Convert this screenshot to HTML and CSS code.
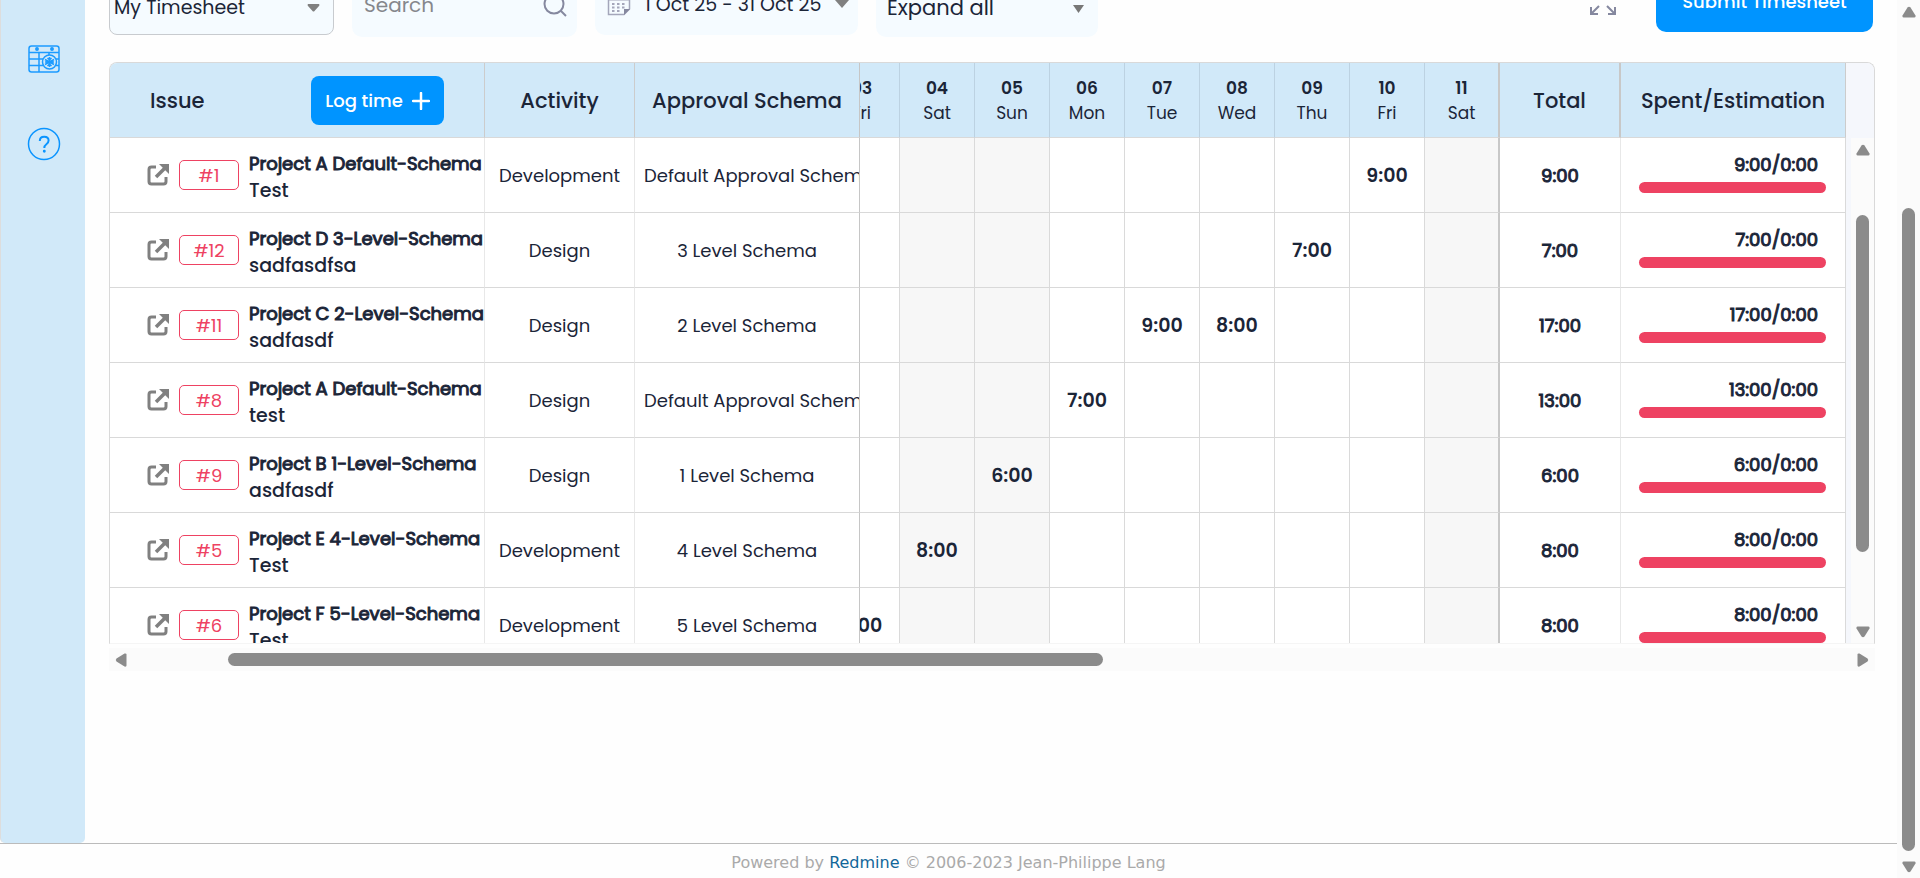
FILE: index.html
```html
<!DOCTYPE html>
<html lang="en">
<head>
<meta charset="utf-8">
<title>Timesheet</title>
<link rel="stylesheet" href="styles.css">
</head>
<body>
<svg class="defs" aria-hidden="true">
  <symbol id="open" viewBox="0 0 22 22"><path d="M9 3H4.500Q2 3 2 5.500V17.500Q2 20 4.500 20H16.500Q19 20 19 17.500V13" fill="none" stroke="currentColor" stroke-width="3"/><path d="M9 13 18 4" stroke="currentColor" stroke-width="3.500"/><path d="M12 0H22V10Z" fill="currentColor"/></symbol>
  <symbol id="arrow" viewBox="0 0 14 12"><path d="M5.500 1.500Q7 0 8.500 1.500L13.500 9.500Q14 11.500 12.500 11.500H1.500Q0 11.500 .5 9.500Z" fill="#8b8b8b"/></symbol>
</svg>
<div class="screen">
  <div class="page">
    <div class="content">
      <nav class="sidebar" aria-label="Main">
        <a href="#" aria-label="Calendar"><svg width="32" height="28" viewBox="0 0 32 28" fill="none" stroke="#1c9bff" stroke-width="1.500"><rect x="1" y="1" width="30" height="26" rx="2.500"/><path d="M1 7.500H31M1 14H15M1 20.500H15M11 7.500V27M21 7.500V10M27 14H31M28 20.500H31"/><circle cx="9" cy="4" r="1.200" fill="#1c9bff"/><circle cx="24" cy="4" r="1.200" fill="#1c9bff"/><circle cx="21.500" cy="17" r="7" fill="#d1e9f9"/><path d="M21.500 12V22M17 14.500 26 19.500M17 19.500 26 14.500M19.500 13 21.500 15 23.500 13M19.500 21 21.500 19 23.500 21M17 17H26"/></svg></a>
        <a href="#" aria-label="Help"><svg width="34" height="34" viewBox="0 0 34 34" fill="none" stroke="#0a94ff" stroke-width="1.500"><circle cx="17" cy="17" r="15.500"/><path d="M12.800 14Q12.800 9.800 17.200 9.800Q21.600 9.800 21.600 13.600Q21.600 15.600 19.400 17.200Q17.300 18.700 17.300 21" stroke-width="2"/><circle cx="17.300" cy="24.200" r=".7" fill="#0a94ff"/></svg></a>
      </nav>
      <main class="main">
        <div class="toolbar">
          <div class="pick pick-view">
            <select aria-label="Timesheet view"><option>My Timesheet</option></select>
            <svg class="caret" width="13" height="8" viewBox="0 0 13 8"><path d="M1 0H12Q13 1 12 2L7.500 7Q6.500 8 5.500 7L1 2Q0 1 1 0Z" fill="#808080"/></svg>
          </div>
          <div class="search">
            <input type="text" aria-label="Search" placeholder="Search">
            <svg width="24" height="24" viewBox="0 0 24 24" fill="none" stroke="#85889f" stroke-width="2"><circle cx="11" cy="11" r="9.500"/><path d="M17.500 17.500 23 23"/></svg>
          </div>
          <button class="range" type="button">
            <svg width="24" height="24" viewBox="0 0 24 24"><path d="M1.500 3.500H22.500V17L17 22.500H1.500Z" fill="none" stroke="#a4a6ba" stroke-width="1.500"/><path d="M1 8H23" stroke="#a4a6ba"/><path d="M17 23V17H23Z" fill="#85889f"/><path d="M5 12h2.500M10 12h2.500M15 12h2.500M5 15.500h2.500M10 15.500h2.500M5 19h2.500M10 19h2.500M15 15.500h2.500" stroke="#a4a6ba" stroke-width="2"/></svg>
            <span>1 Oct 25 - 31 Oct 25</span>
            <svg width="14" height="8" viewBox="0 0 14 8"><path d="M0 0H14L7 8Z" fill="#808080"/></svg>
          </button>
          <div class="pick pick-expand">
            <select aria-label="Expand rows"><option>Expand all</option></select>
            <svg class="caret" width="11" height="8" viewBox="0 0 11 8"><path d="M0 0H11L5.500 8Z" fill="#777"/></svg>
          </div>
          <button class="full" type="button" aria-label="Full screen"><svg width="26" height="26" viewBox="0 0 26 26" fill="none" stroke="#85889f" stroke-width="2"><path d="M1 8V1H8M1 1 9 9M18 1H25V8M25 1 17 9M1 18V25H8M1 25 9 17M25 18V25H18M25 25 17 17"/></svg></button>
          <button class="submit" type="button">Submit Timesheet</button>
        </div>

        <div class="frame">
          <div class="clip">
            <table class="sheet">
              <colgroup><col class="c-issue"><col class="c-act"><col class="c-schema"><col class="c-cut"><col class="c-day"><col class="c-day"><col class="c-day"><col class="c-day"><col class="c-day"><col class="c-day"><col class="c-day"><col class="c-day"><col class="c-total"><col class="c-spent"></colgroup>
              <thead>
                <tr>
                  <th><div class="issue-head"><span>Issue</span><button class="log" type="button">Log time <svg width="18" height="18" viewBox="0 0 18 18"><path d="M9 1V17M1 9H17" stroke="#fff" stroke-width="2.500" stroke-linecap="round"/></svg></button></div></th>
                  <th>Activity</th><th class="edge">Approval Schema</th>
                  <th class="day cut"><div><span><b>03</b>Fri</span></div></th>
                  <th class="day"><b>04</b>Sat</th><th class="day"><b>05</b>Sun</th><th class="day"><b>06</b>Mon</th><th class="day"><b>07</b>Tue</th><th class="day"><b>08</b>Wed</th><th class="day"><b>09</b>Thu</th><th class="day"><b>10</b>Fri</th><th class="day last"><b>11</b>Sat</th>
                  <th class="last">Total</th><th>Spent/Estimation</th>
                </tr>
              </thead>
              <tbody>
                <tr><td><div class="issue"><a class="open" href="#" aria-label="Open issue"><svg width="22" height="22"><use href="#open"/></svg></a><a class="num" href="#">#1</a><p><b>Project A Default-Schema</b><br><span>Test</span></p></div></td><td>Development</td><td class="schema edge long">Default Approval Schema</td><td></td><td class="off"></td><td class="off"></td><td></td><td></td><td></td><td></td><td class="h">9:00</td><td class="off last"></td><td class="total">9:00</td><td class="spent"><span>9:00/0:00</span><i></i></td></tr>
                <tr><td><div class="issue"><a class="open" href="#" aria-label="Open issue"><svg width="22" height="22"><use href="#open"/></svg></a><a class="num" href="#">#12</a><p><b>Project D 3-Level-Schema</b><br><span>sadfasdfsa</span></p></div></td><td>Design</td><td class="schema edge">3 Level Schema</td><td></td><td class="off"></td><td class="off"></td><td></td><td></td><td></td><td class="h">7:00</td><td></td><td class="off last"></td><td class="total">7:00</td><td class="spent"><span>7:00/0:00</span><i></i></td></tr>
                <tr><td><div class="issue"><a class="open" href="#" aria-label="Open issue"><svg width="22" height="22"><use href="#open"/></svg></a><a class="num" href="#">#11</a><p><b>Project C 2-Level-Schema</b><br><span>sadfasdf</span></p></div></td><td>Design</td><td class="schema edge">2 Level Schema</td><td></td><td class="off"></td><td class="off"></td><td></td><td class="h">9:00</td><td class="h">8:00</td><td></td><td></td><td class="off last"></td><td class="total">17:00</td><td class="spent"><span>17:00/0:00</span><i></i></td></tr>
                <tr><td><div class="issue"><a class="open" href="#" aria-label="Open issue"><svg width="22" height="22"><use href="#open"/></svg></a><a class="num" href="#">#8</a><p><b>Project A Default-Schema</b><br><span>test</span></p></div></td><td>Design</td><td class="schema edge long">Default Approval Schema</td><td></td><td class="off"></td><td class="off"></td><td class="h">7:00</td><td></td><td></td><td></td><td></td><td class="off last"></td><td class="total">13:00</td><td class="spent"><span>13:00/0:00</span><i></i></td></tr>
                <tr><td><div class="issue"><a class="open" href="#" aria-label="Open issue"><svg width="22" height="22"><use href="#open"/></svg></a><a class="num" href="#">#9</a><p><b>Project B 1-Level-Schema</b><br><span>asdfasdf</span></p></div></td><td>Design</td><td class="schema edge">1 Level Schema</td><td></td><td class="off"></td><td class="off h">6:00</td><td></td><td></td><td></td><td></td><td></td><td class="off last"></td><td class="total">6:00</td><td class="spent"><span>6:00/0:00</span><i></i></td></tr>
                <tr><td><div class="issue"><a class="open" href="#" aria-label="Open issue"><svg width="22" height="22"><use href="#open"/></svg></a><a class="num" href="#">#5</a><p><b>Project E 4-Level-Schema</b><br><span>Test</span></p></div></td><td>Development</td><td class="schema edge">4 Level Schema</td><td></td><td class="off h">8:00</td><td class="off"></td><td></td><td></td><td></td><td></td><td></td><td class="off last"></td><td class="total">8:00</td><td class="spent"><span>8:00/0:00</span><i></i></td></tr>
                <tr><td><div class="issue"><a class="open" href="#" aria-label="Open issue"><svg width="22" height="22"><use href="#open"/></svg></a><a class="num" href="#">#6</a><p><b>Project F 5-Level-Schema</b><br><span>Test</span></p></div></td><td>Development</td><td class="schema edge">5 Level Schema</td><td class="cut h"><div><span>8:00</span></div></td><td class="off"></td><td class="off"></td><td></td><td></td><td></td><td></td><td></td><td class="off last"></td><td class="total">8:00</td><td class="spent"><span>8:00/0:00</span><i></i></td></tr>
              </tbody>
            </table>
          </div>
          <div class="gutter">
            <div class="bar bar-v"><svg width="14" height="12"><use href="#arrow"/></svg><div class="track"><div class="thumb"></div></div><svg class="down" width="14" height="12"><use href="#arrow"/></svg></div>
          </div>
        </div>
        <div class="bar bar-h"><svg class="left" width="14" height="12"><use href="#arrow"/></svg><div class="track"><div class="thumb"></div></div><svg class="right" width="14" height="12"><use href="#arrow"/></svg></div>
      </main>
    </div>
    <footer class="footer">Powered by <a href="#">Redmine</a> © 2006-2023 Jean-Philippe Lang</footer>
  </div>
  <div class="bar bar-v bar-page"><svg width="14" height="12"><use href="#arrow"/></svg><div class="track"><div class="thumb"></div></div><svg class="down" width="14" height="12"><use href="#arrow"/></svg></div>
</div>
</body>
</html>
```
FILE: styles.css
```css
* { box-sizing: border-box; }
body { margin: 0; background: #fefefe; color: #1b2538; font: 18px/25px Poppins, Inter, "Open Sans", sans-serif; }
button, input, select { font: inherit; color: inherit; margin: 0; border: 0; }
button { cursor: pointer; }
a { text-decoration: none; }
svg { display: block; flex: none; }
.defs { position: absolute; width: 0; height: 0; }

.screen { display: flex; height: 100vh; overflow: hidden; }
.page { flex: 1; min-width: 0; display: flex; flex-direction: column; }
.content { flex: 1; min-height: 0; display: flex; }

.sidebar { width: 85px; flex: none; background: #d1e9f9; border-left: 1px solid #ddd; border-radius: 0 0 5px 5px; padding: 45px 0 0 2px; display: flex; flex-direction: column; align-items: center; gap: 54px; }

.main { flex: 1; min-width: 0; padding: 0 22px 0 24px; }

/* The view is scrolled, so the toolbar starts above the fold */
.toolbar { display: flex; align-items: flex-start; height: 82px; margin-top: -20px; padding-right: 2px; font-size: 19px; }
.pick { display: flex; align-items: center; position: relative; }
.pick select { width: 100%; height: 100%; background: #f5fbff; border-radius: 10px; appearance: none; }
.pick .caret { position: absolute; right: 14px; pointer-events: none; }
.pick-view { width: 225px; height: 55px; }
.pick-view select { border: 1px solid #c8cbcf; border-radius: 8px; padding: 0 4px; }
.pick-expand { width: 222px; height: 57px; margin-left: 18px; }
.pick-expand select { padding: 0 11px 2px; font-size: 21px; }
.search { display: flex; width: 225px; height: 57px; margin-left: 18px; padding: 0 10px 7px 12px; align-items: center; background: #f5fbff; border-radius: 10px; font-size: 20px; }
.search input { flex: 1; min-width: 0; padding: 0; background: none; }
.search input::placeholder { color: #85878c; }
.range { width: 263px; height: 55px; margin-left: 18px; padding: 0 9px 7px 12px; display: flex; align-items: center; justify-content: space-between; background: #f5fbff; border-radius: 10px; font-size: 19px; white-space: nowrap; }
.full { margin: 9px 40px 0 auto; padding: 0; background: none; }
.submit { width: 217px; height: 52px; padding: 0 0 9px; background: #0094ff; color: #fff; border-radius: 10px; font-size: 18px; font-weight: 500; white-space: nowrap; }

.frame { display: flex; height: 582px; border: 1px solid #d9d9d9; border-bottom-color: #f5f5f5; border-radius: 8px 8px 0 0; overflow: hidden; }
.clip { flex: 1; min-width: 0; overflow: hidden; }
.sheet { width: 100%; table-layout: fixed; border-collapse: separate; border-spacing: 0; }
.c-issue { width: 375px; }
.c-act { width: 150px; }
.c-schema { width: 225px; }
.c-cut { width: 40px; }
.c-day { width: 75px; }
.c-total { width: 121px; }
.c-spent { width: 225px; }
th, td { height: 75px; padding: 0; border-right: 1px solid #dadada; border-bottom: 1px solid #d9d9d9; text-align: center; overflow: hidden; white-space: nowrap; }
th { padding-top: 1px; background: #d1e9f9; font-size: 21px; font-weight: 500; border-right-color: #ccc; }
td { background: #fff; }
td:nth-child(-n+2), td.total { border-right-color: #e8e8e8; }
.day { padding-top: 2px; font-size: 17px; font-weight: 400; border-right-color: #bcd2e2; }
.day b { display: block; font-weight: 600; }
.edge { border-right-color: #c6c6c6; }
.last { border-right: 2px solid #c8c8c8; }
td.off { background: #f7f7f7; }
.schema.long { padding-left: 9px; text-align: left; text-overflow: clip; }
.h { font-size: 19px; font-weight: 600; }
.cut div { display: flex; justify-content: flex-end; }
.cut span { flex: none; width: 75px; }
.total, .spent, .issue b { font-weight: 400; -webkit-text-stroke: 1px currentColor; }

.issue-head { display: flex; align-items: center; justify-content: space-between; padding: 0 40px; }
.log { width: 133px; height: 49px; padding: 0; display: flex; align-items: center; justify-content: center; gap: 9px; border-radius: 8px; background: #0094ff; color: #fff; font-size: 18px; font-weight: 500; }
.issue { display: flex; align-items: center; padding-left: 37px; text-align: left; }
.open { color: #808080; }
.num { flex: none; width: 60px; height: 30px; margin: 0 10px; border: 1px solid #ee4262; border-radius: 5px; color: #ee4262; text-align: center; line-height: 30px; }
.issue p { margin: 0; padding-top: 4px; line-height: 27px; }
.issue p span { font-size: 19px; font-weight: 500; }
.spent { padding: 0 19px 5px 18px; text-align: right; }
.spent span { display: block; padding-right: 8px; }
.spent i { display: block; height: 11px; margin-top: 5px; border-radius: 6px; background: #ee4262; }

.gutter { width: 28px; flex: none; padding: 75px 0 0 5px; background: #f5f7fc; }
.bar { display: flex; align-items: center; background: #fbfbfb; }
.thumb { background: #8b8b8b; border-radius: 7px; }
.track { flex: 1; display: flex; }
.bar-v { flex-direction: column; height: 100%; padding: 6px 0 5px; }
.bar-v .track { flex-direction: column; }
.bar-v .thumb { width: 13px; height: 337px; margin-top: 59px; }
.down { transform: rotate(180deg); }
.bar-h { height: 23px; margin-top: 4px; padding: 0 5px; }
.bar-h .thumb { width: 50.6%; height: 13px; margin-left: 5.8%; }
.left { transform: rotate(-90deg); }
.right { transform: rotate(90deg); }
.bar-page { width: 23px; flex: none; }
.bar-page .thumb { height: 643px; margin-top: 190px; }

.footer { flex: none; height: 35px; border-top: 1px solid #bbb; padding-top: 6px; text-align: center; color: #aaa; font: 16px/25px Verdana, "DejaVu Sans", sans-serif; }
.footer a { color: #169; }
```
